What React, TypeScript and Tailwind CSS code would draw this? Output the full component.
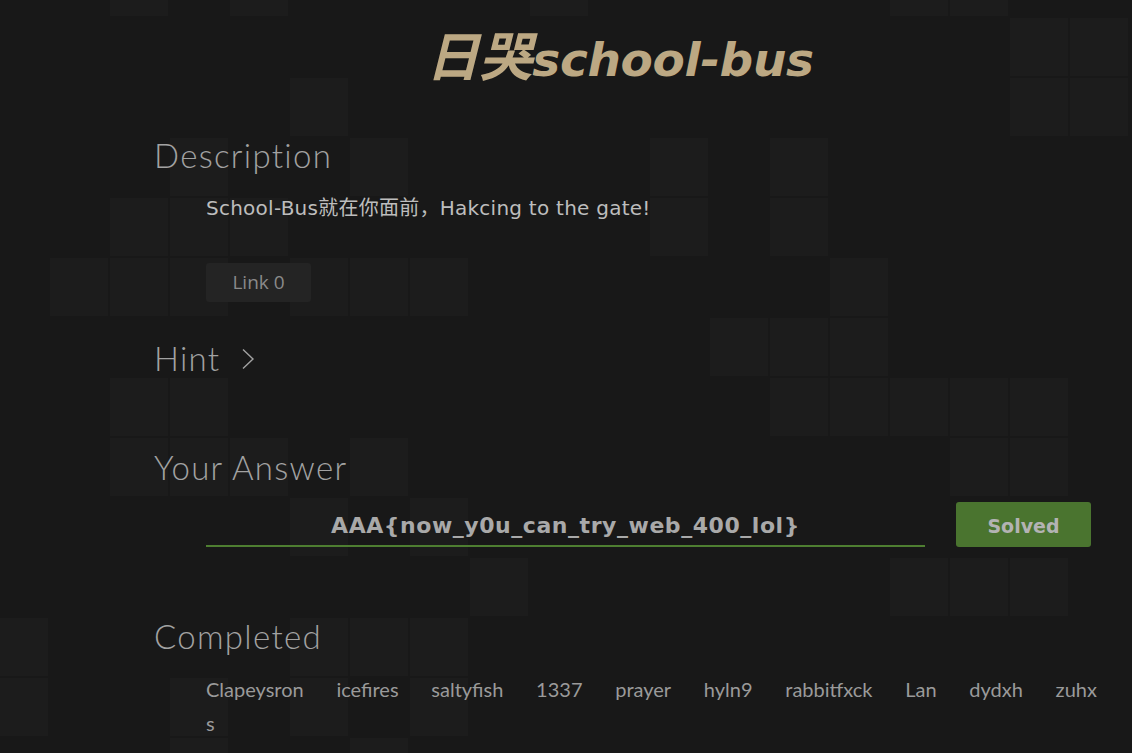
import React from "react";

const LIT: Record<number, number[]> = {
  0: [2, 4, 9, 15, 16],
  1: [17, 18],
  2: [5, 17, 18],
  3: [3, 6, 11, 13],
  4: [2, 3, 4, 11, 13],
  5: [1, 2, 3, 5, 6, 7, 14],
  6: [12, 13, 14],
  7: [2, 3, 13, 14, 15, 16, 17],
  8: [2, 3, 4, 6, 16, 17],
  9: [5, 7],
  10: [8, 15, 16, 17],
  11: [0, 5, 6, 7],
  12: [0, 3, 5, 7],
  13: [3, 6],
};

function BgGrid() {
  const cells: React.ReactNode[] = [];
  for (let r = 0; r < 14; r++) {
    for (let c = 0; c < 20; c++) {
      const on = (LIT[r] || []).includes(c);
      cells.push(
        <div key={`${r}-${c}`} className={on ? "bg-[#1c1c1c]" : "bg-transparent"} />
      );
    }
  }
  return (
    <div className="pointer-events-none absolute left-[-10px] top-[-42px] grid grid-cols-[repeat(20,58px)] auto-rows-[58px] gap-[2px]">
      {cells}
    </div>
  );
}

const heading =
  "h-[40px] text-[33px] leading-[40px] font-light tracking-[1.3px] text-[#a2a2a2] [font-family:Lato,'Noto_Sans',sans-serif]";

const names = [
  "Clapeysron",
  "icefires",
  "saltyfish",
  "1337",
  "prayer",
  "hyln9",
  "rabbitfxck",
  "Lan",
  "dydxh",
  "zuhx",
];

export default function App() {
  return (
    <div className="relative min-h-[753px] w-full overflow-hidden bg-[#181818]">
      <BgGrid />
      <div className="relative w-[1086px] pl-[154px]">
        <h1 className="pt-[18px] h-[92px] text-center leading-[70px] font-bold italic text-[#bca883] whitespace-nowrap">
          <span className="text-[53px] [font-family:'Noto_Sans_CJK_SC',sans-serif]">日哭</span>
          <span className="text-[47px] tracking-[-0.3px] [font-family:'DejaVu_Sans',sans-serif]">school-bus</span>
        </h1>

        <section className="mt-[43px]">
          <h2 className={heading}>Description</h2>
          <div className="pl-[52px]">
            <p className="mt-[18px] h-[30px] text-[20px] leading-[30px] tracking-[0.25px] text-[#bdbdbd] [font-family:'DejaVu_Sans','Noto_Sans_CJK_SC',sans-serif]">
              School-Bus就在你面前，Hakcing to the gate!
            </p>
            <button className="mt-[40px] flex h-[39px] w-[105px] items-center justify-center rounded-[3px] bg-[#242424] text-[19px] text-[#8a8a8a] [font-family:'Open_Sans',sans-serif]">
              Link 0
            </button>
          </div>
        </section>

        <section className="mt-[36px] flex h-[40px] items-center">
          <h2 className={heading}>Hint</h2>
          <svg className="ml-[21px] mt-[2px]" width="14" height="22" viewBox="0 0 14 22" fill="none">
            <path d="M2 1.5 L12 11 L2 20.5" stroke="#a2a2a2" strokeWidth="1.4" />
          </svg>
        </section>

        <section className="mt-[69px]">
          <h2 className={heading}>Your Answer</h2>
          <div className="mt-[15px] flex w-[937px] items-end pl-[52px]">
            <div className="flex h-[45px] w-[719px] items-center justify-center border-b-2 border-[#4e7e31] pt-[4px] text-[22px] font-bold tracking-[0.55px] text-[#a9a9a9] [font-family:'DejaVu_Sans',sans-serif]">
              AAA{"{"}now_y0u_can_try_web_400_lol{"}"}
            </div>
            <button className="ml-[31px] flex h-[45px] w-[135px] items-center justify-center rounded-[3px] bg-[#4a742f] pt-[3px] text-[19px] font-bold text-[#b3b3b3] [font-family:'DejaVu_Sans',sans-serif]">
              Solved
            </button>
          </div>
        </section>

        <section className="mt-[69px]">
          <h2 className={heading}>Completed</h2>
          <div className="mt-[16px] pl-[52px] text-[20px] leading-[34px] text-[#9a9a9a] [font-family:Lato,sans-serif]">
            <div className="flex w-[891px] justify-between">
              {names.map((n) => (
                <span key={n}>{n}</span>
              ))}
            </div>
            <div>s</div>
          </div>
        </section>
      </div>
    </div>
  );
}
